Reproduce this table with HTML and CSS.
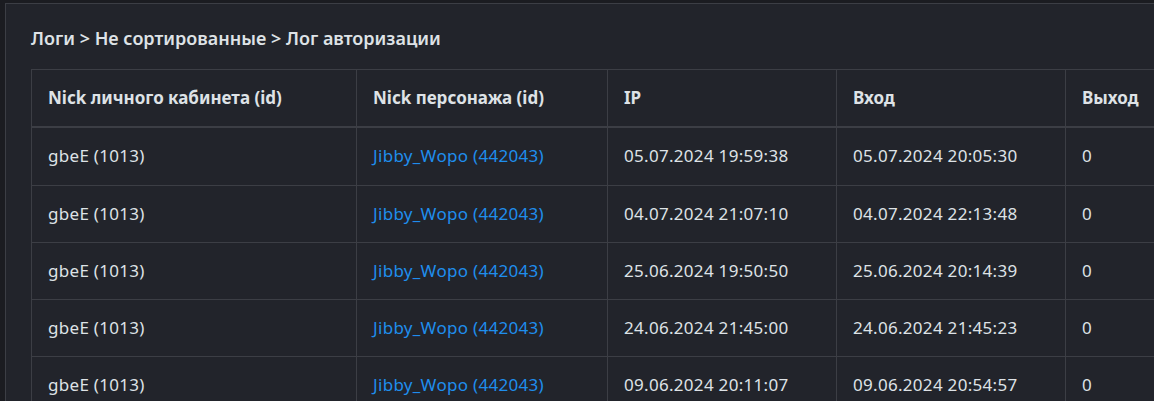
FILE: index.html
```html
<!DOCTYPE html>
<html lang="ru">
<head>
    <meta charset="UTF-8">
    <meta name="viewport" content="width=device-width, initial-scale=1.0">
    <title>Лог авторизации</title>
    <link rel="stylesheet" href="styles.css">
</head>
<body>
    <div class="card">
        <div class="breadcrumbs">Логи &gt; Не сортированные &gt; Лог авторизации</div>

        <table class="log-table">
            <thead>
                <tr>
                    <th class="col-account">Nick личного кабинета (id)</th>
                    <th class="col-char">Nick персонажа (id)</th>
                    <th class="col-ip">IP</th>
                    <th class="col-in">Вход</th>
                    <th class="col-out">Выход</th>
                </tr>
            </thead>
            <tbody>
                <tr>
                    <td>gbeE (1013)</td>
                    <td><a href="#">Jibby_Wopo (442043)</a></td>
                    <td>05.07.2024 19:59:38</td>
                    <td>05.07.2024 20:05:30</td>
                    <td>0</td>
                </tr>
                <tr>
                    <td>gbeE (1013)</td>
                    <td><a href="#">Jibby_Wopo (442043)</a></td>
                    <td>04.07.2024 21:07:10</td>
                    <td>04.07.2024 22:13:48</td>
                    <td>0</td>
                </tr>
                <tr>
                    <td>gbeE (1013)</td>
                    <td><a href="#">Jibby_Wopo (442043)</a></td>
                    <td>25.06.2024 19:50:50</td>
                    <td>25.06.2024 20:14:39</td>
                    <td>0</td>
                </tr>
                <tr>
                    <td>gbeE (1013)</td>
                    <td><a href="#">Jibby_Wopo (442043)</a></td>
                    <td>24.06.2024 21:45:00</td>
                    <td>24.06.2024 21:45:23</td>
                    <td>0</td>
                </tr>
                <tr>
                    <td>gbeE (1013)</td>
                    <td><a href="#">Jibby_Wopo (442043)</a></td>
                    <td>09.06.2024 20:11:07</td>
                    <td>09.06.2024 20:54:57</td>
                    <td>0</td>
                </tr>
            </tbody>
        </table>
    </div>
</body>
</html>
```

FILE: styles.css
```css
body {
    margin: 0;
    padding: 3px 0 0 5px;
    background-color: #1b1c21;
    font-family: "Noto Sans", "Open Sans", sans-serif;
    font-size: 17px;
    line-height: 24.3px;
    color: #dee2e6;
    overflow: hidden;
}
.card {
    width: 1300px;
    background-color: #22242b;
    border: 1px solid #3c3e45;
    padding: 21px 25px 40px 25px;
}
.breadcrumbs {
    font-size: 18px;
    line-height: 26px;
    font-weight: 600;
    margin-bottom: 18px;
}
.log-table {
    border-collapse: collapse;
}
.log-table th,
.log-table td {
    box-sizing: border-box;
    border: 1px solid #3c3e45;
    padding: 16px;
    text-align: left;
    white-space: nowrap;
}
.log-table th {
    font-weight: 700;
    border-bottom-width: 2px;
}
.log-table td {
    letter-spacing: 0.3px;
}
.col-account { width: 325px; }
.col-char { width: 251px; }
.col-ip { width: 229px; }
.col-in { width: 229px; }
.col-out { width: 200px; }
a {
    color: #1f8eed;
    text-decoration: none;
}
```
